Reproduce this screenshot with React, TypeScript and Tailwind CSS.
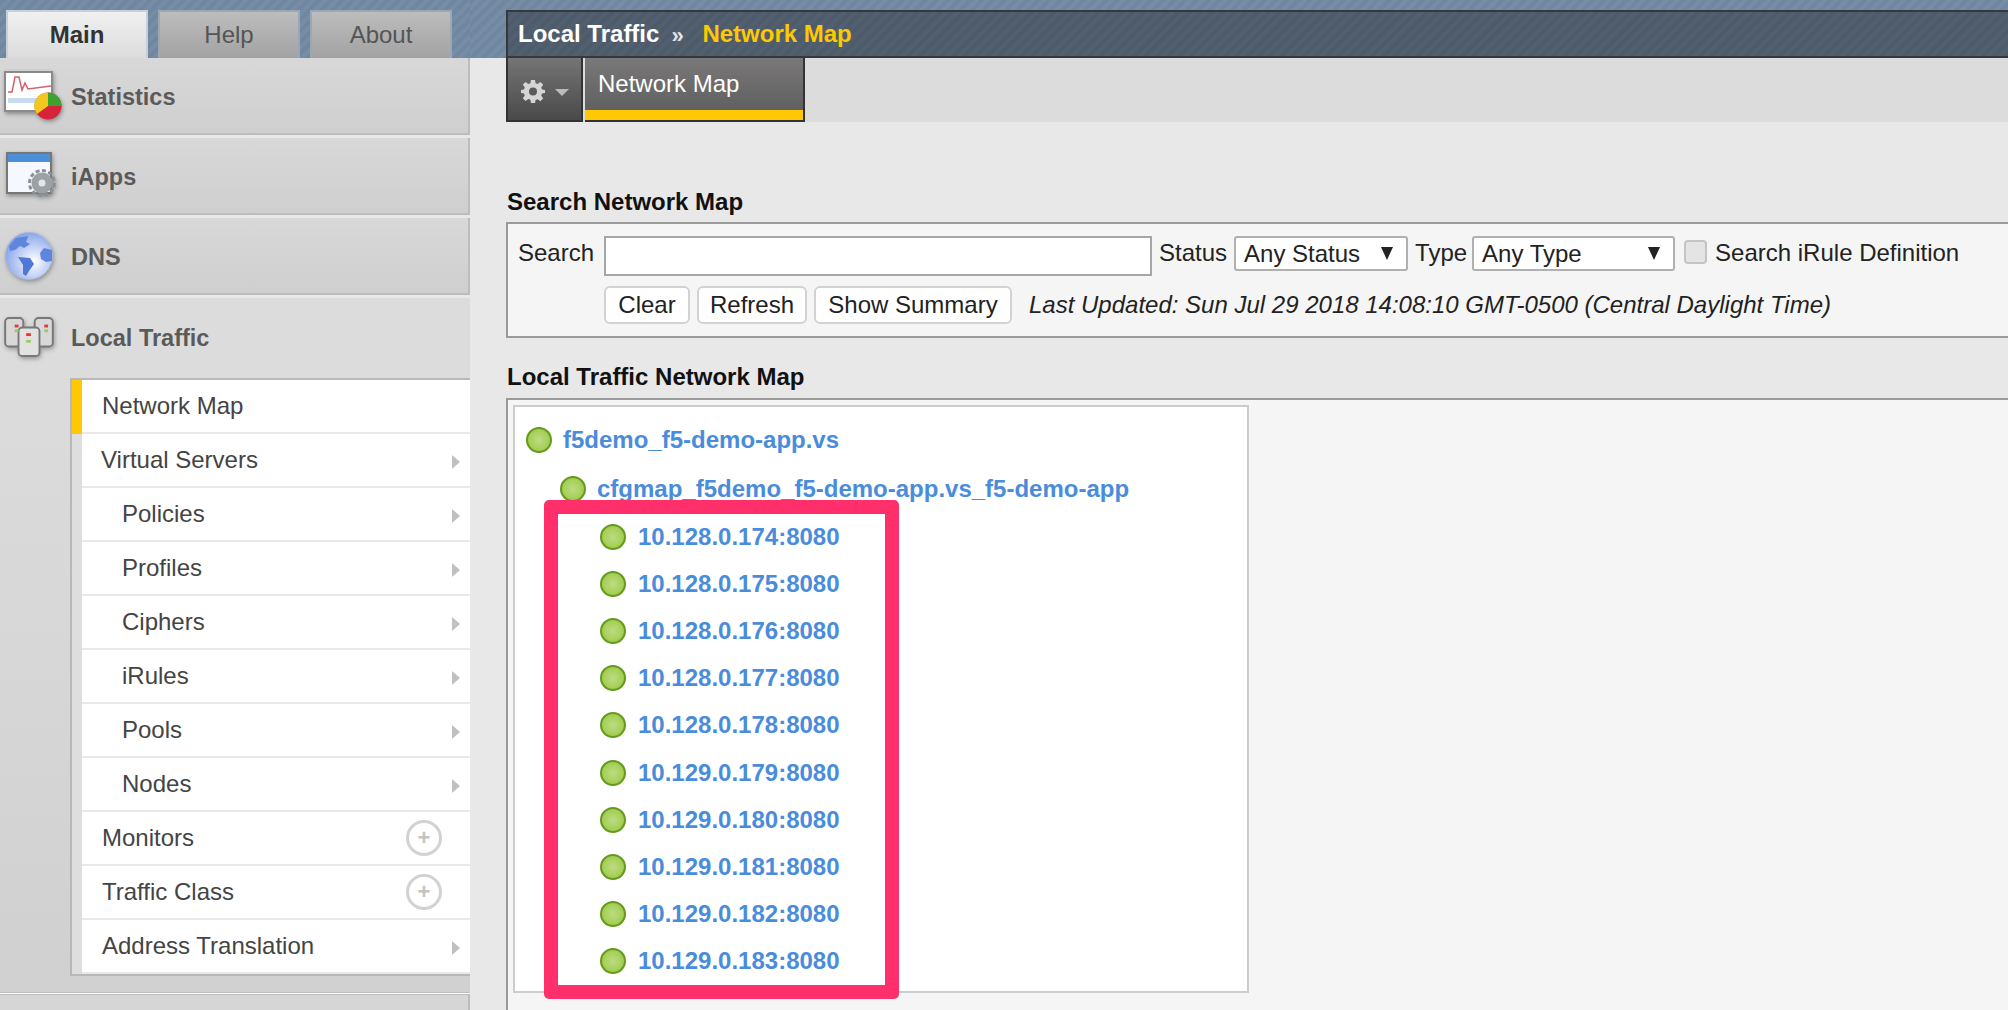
import React from 'react';

const menu = [
  { label: 'Network Map', pad: 'pl-[20px]', active: true },
  { label: 'Virtual Servers', pad: 'pl-[19px]', arrow: true },
  { label: 'Policies', pad: 'pl-[40px]', arrow: true },
  { label: 'Profiles', pad: 'pl-[40px]', arrow: true },
  { label: 'Ciphers', pad: 'pl-[40px]', arrow: true },
  { label: 'iRules', pad: 'pl-[40px]', arrow: true },
  { label: 'Pools', pad: 'pl-[40px]', arrow: true },
  { label: 'Nodes', pad: 'pl-[40px]', arrow: true },
  { label: 'Monitors', pad: 'pl-[20px]', plus: true },
  { label: 'Traffic Class', pad: 'pl-[20px]', plus: true },
  { label: 'Address Translation', pad: 'pl-[20px]', arrow: true },
];

const members = [
  '10.128.0.174:8080',
  '10.128.0.175:8080',
  '10.128.0.176:8080',
  '10.128.0.177:8080',
  '10.128.0.178:8080',
  '10.129.0.179:8080',
  '10.129.0.180:8080',
  '10.129.0.181:8080',
  '10.129.0.182:8080',
  '10.129.0.183:8080',
];

const StatsIcon = () => (
  <svg width="60" height="52" viewBox="0 0 60 52" className="drop-shadow-[1px_2px_2px_rgba(0,0,0,0.35)]">
    <rect x="1" y="2" width="47" height="39" fill="#fff" stroke="#8a8a8a" strokeWidth="2" />
    <rect x="4" y="28" width="43" height="5" fill="#c9dcef" />
    <path d="M4 22 L8 22 L11 7 L15 7 L18 20 L21 13 L24 19 L47 16" fill="none" stroke="#d4606a" strokeWidth="1.500" />
    <circle cx="44" cy="36" r="13.500" fill="#d9233a" />
    <path d="M44 36 L44 22.500 A13.500 13.500 0 0 1 57.500 36 Z" fill="#3ea32e" />
    <path d="M44 36 L44 22.500 A13.500 13.500 0 0 0 33 44 Z" fill="#f2c81e" />
  </svg>
);

const AppsIcon = () => (
  <svg width="56" height="50" viewBox="0 0 56 50" className="drop-shadow-[1px_2px_2px_rgba(0,0,0,0.35)]">
    <rect x="3" y="2" width="44" height="40" fill="#f6f8ff" stroke="#777" strokeWidth="2" />
    <rect x="4" y="3" width="42" height="8" fill="#4a8fd8" />
    <circle cx="38" cy="32" r="12.500" fill="none" stroke="#8b9096" strokeWidth="3" strokeDasharray="4 2.500" />
    <circle cx="38" cy="32" r="10.500" fill="#9ca1a6" />
    <circle cx="38" cy="32" r="3.500" fill="#e6e6e6" />
  </svg>
);

const GlobeIcon = () => (
  <svg width="50" height="50" viewBox="0 0 50 50" className="drop-shadow-[1px_2px_2px_rgba(0,0,0,0.3)]">
    <defs>
      <radialGradient id="globe" cx="60%" cy="62%" r="70%">
        <stop offset="0%" stopColor="#ffffff" />
        <stop offset="100%" stopColor="#7a9bea" />
      </radialGradient>
    </defs>
    <circle cx="25" cy="25" r="23.500" fill="url(#globe)" stroke="#a9b6d6" />
    <path d="M5 15 L12 7 L24 5 L22 11 L26 13 L20 17 L16 15 L11 19 L6 20 Z" fill="#5f86dd" />
    <path d="M14 26 L26 27 L30 33 L25 40 L22 45 L19 43 L19 34 Z" fill="#4f78d6" />
    <path d="M36 22 L40 17 L48 19 L48 30 L42 31 L37 28 Z" fill="#5f86dd" />
  </svg>
);

const ServersIcon = () => (
  <svg width="50" height="40" viewBox="0 0 52 42" className="drop-shadow-[1px_2px_2px_rgba(0,0,0,0.3)]">
    <rect x="1" y="1" width="19" height="30" rx="4" fill="#d8d8d8" stroke="#777" strokeWidth="2" />
    <rect x="32" y="1" width="19" height="30" rx="4" fill="#d8d8d8" stroke="#777" strokeWidth="2" />
    <rect x="15" y="11" width="22" height="30" rx="4" fill="#e2e2e2" stroke="#777" strokeWidth="2" />
    <rect x="11" y="8" width="4" height="3" fill="#e33" />
    <rect x="11" y="13" width="4" height="3" fill="#9c6" />
    <rect x="42" y="8" width="4" height="3" fill="#e33" />
    <rect x="42" y="13" width="4" height="3" fill="#9c6" />
    <rect x="23" y="17" width="5" height="3" fill="#e33" />
    <rect x="23" y="24" width="5" height="3" fill="#9c6" />
  </svg>
);

const Gear = () => (
  <svg width="24" height="26" viewBox="0 0 24 24" fill="#d4d4d4">
    <path d="M10 1h4l.6 3.200 2 .8L19.400 3l2.800 2.800-2 2.800.8 2L24 11v3l-3 .6-.8 2 2 2.800-2.800 2.800-2.800-2-2 .8L14 24h-4l-.6-3.200-2-.8L4.600 22l-2.800-2.800 2-2.800-.8-2L0 14v-3l3-.6.8-2-2-2.800L4.600 3l2.800 2 2-.8z" />
    <circle cx="12" cy="12.500" r="4" fill="#5a5a5a" />
  </svg>
);

const Dot = () => (
  <span className="block w-[26px] h-[26px] rounded-full border-2 border-[#659a1e] bg-[radial-gradient(circle_at_50%_50%,#bcdc84,#a6d058_60%,#8ab832)]" />
);

const Arrow = () => (
  <span className="w-0 h-0 mr-[10px] mt-[3px] border-y-[7px] border-y-transparent border-l-[8px] border-l-[#c0c0c0]" />
);

const Plus = () => (
  <span className="flex items-center justify-center w-[36px] h-[36px] mr-[28px] rounded-full border-[3px] border-[#d2d2d2] text-[#c4c4c4] font-bold text-[22px] leading-none">
    +
  </span>
);

const SideItem = ({ icon, label, light }: { icon: React.ReactNode; label: string; light?: boolean }) => (
  <div
    className={
      light
        ? 'flex items-center h-[77px] bg-[#dcdcdc]'
        : 'flex items-center h-[77px] mb-[3px] border-r-2 border-b-2 border-[#bdbdbd] bg-gradient-to-b from-[#d8d8d8] to-[#cfcfcf]'
    }
  >
    <div className="w-[71px] pl-[4px] flex items-center">{icon}</div>
    <span className="pt-[3px] font-bold text-[#5a5a5a] text-[23.500px]">{label}</span>
  </div>
);

const Tab = ({ label, active }: { label: string; active?: boolean }) => (
  <div
    className={
      active
        ? 'flex items-center justify-center w-[142px] h-[48px] border-x-2 border-t-2 border-[#c6d0da] bg-gradient-to-b from-[#f0f0f0] to-[#dcdcdc] font-bold text-[#333]'
        : 'flex items-center justify-center w-[142px] h-[48px] border-x-2 border-t-2 border-[#9aa8b6] bg-gradient-to-b from-[#bdbdbd] to-[#a2a2a2] text-[#555]'
    }
  >
    {label}
  </div>
);

const Dropdown = ({ label, width }: { label: string; width: string }) => (
  <div className={`flex items-center justify-between h-[35px] pl-[8px] pr-[13px] bg-white border-2 border-[#b0b0b0] rounded-[3px] ${width}`}>
    <span>{label}</span>
    <span className="w-0 h-0 border-x-[6px] border-x-transparent border-t-[13px] border-t-[#222]" />
  </div>
);

const Btn = ({ label, width }: { label: string; width: string }) => (
  <div className={`flex items-center justify-center h-[38px] bg-white border-2 border-[#d2d2d2] rounded-[6px] ${width}`}>{label}</div>
);

const Link = ({ text }: { text: string }) => <span className="font-bold text-[#4a8cdc]">{text}</span>;

export default function App() {
  return (
    <div className="flex w-[2008px] h-[1010px] overflow-hidden bg-[#e8e8e8] text-[24px] leading-[28px] text-[#333] font-['Liberation_Sans',Arial,sans-serif]">
      {/* left nav */}
      <div className="w-[470px] shrink-0 flex flex-col">
        <div className="flex gap-[10px] h-[58px] pt-[10px] pl-[6px] bg-[repeating-linear-gradient(135deg,#6f87a1_0,#6f87a1_4px,#768da5_4px,#768da5_8px)]">
          <Tab label="Main" active />
          <Tab label="Help" />
          <Tab label="About" />
        </div>
        <SideItem icon={<StatsIcon />} label="Statistics" />
        <SideItem icon={<AppsIcon />} label="iApps" />
        <SideItem icon={<GlobeIcon />} label="DNS" />
        <SideItem icon={<ServersIcon />} label="Local Traffic" light />
        <div className="flex-1 flex flex-col bg-gradient-to-b from-[#dcdcdc] to-[#d0d0d0]">
          <div className="ml-[70px] mt-[3px] border-l-2 border-y-2 border-[#b8b8b8]">
            {menu.map((item) => (
              <div key={item.label} className="flex h-[54px]">
                <div className={item.active ? 'w-[10px] bg-[#ffc800]' : 'w-[10px] bg-[#dedede]'} />
                <div className={`flex-1 flex items-center justify-between bg-white border-b-2 border-[#e8e8e8] text-[#444] ${item.pad}`}>
                  <span>{item.label}</span>
                  {item.arrow && <Arrow />}
                  {item.plus && <Plus />}
                </div>
              </div>
            ))}
          </div>
          <div className="mt-[16px] h-[3px] border-y border-[#bdbdbd] bg-white" />
          <div className="flex-1 border-r-2 border-[#bdbdbd] bg-[#d6d6d6]" />
        </div>
      </div>

      {/* main */}
      <div className="flex-1 flex flex-col min-w-0">
        <div className="pt-[10px] pl-[36px] bg-[repeating-linear-gradient(135deg,#6f87a1_0,#6f87a1_4px,#768da5_4px,#768da5_8px)]">
          <div className="flex items-center h-[48px] pl-[10px] border-2 border-r-0 border-[#33393f] bg-[repeating-linear-gradient(135deg,#4e5b6b_0,#4e5b6b_4px,#525f6f_4px,#525f6f_8px)] font-bold text-white">
            <span>Local Traffic</span>
            <span className="w-[43px] pl-[12px] pt-[4px] text-[22px] text-[#e6e6e6]">»</span>
            <span className="text-[#ffc800]">Network Map</span>
          </div>
        </div>
        <div className="flex h-[64px] ml-[36px] bg-[#dcdcdc]">
          <div className="flex items-center gap-[10px] w-[77px] pl-[13px] pt-[4px] border-2 border-t-0 border-[#333] bg-gradient-to-b from-[#757575] to-[#4a4a4a]">
            <Gear />
            <span className="w-0 h-0 mt-[2px] border-x-[7px] border-x-transparent border-t-[7px] border-t-[#bbb]" />
          </div>
          <div className="w-[220px] ml-[2px] flex flex-col border-2 border-t-0 border-l-0 border-[#333] bg-gradient-to-b from-[#7a7878] to-[#5c5c5c] text-white">
            <div className="flex-1 pl-[13px] pt-[12px]">Network Map</div>
            <div className="h-[10px] bg-[#ffc800]" />
          </div>
        </div>

        <div className="ml-[37px] mt-[66px] h-[26px] font-bold text-[#111]">Search Network Map</div>
        <div className="ml-[36px] mt-[8px] h-[116px] border-y-2 border-l-2 border-[#9a9a9a] bg-[#f5f5f5] text-[#222]">
          <div className="flex items-start gap-[7px] mt-[12px] pl-[10px] h-[40px] leading-[34px]">
            <span className="w-[79px]">Search</span>
            <div className="w-[548px] h-[40px] bg-white border-2 border-[#a6a6a6]" />
            <span>Status</span>
            <Dropdown label="Any Status" width="w-[174px]" />
            <span>Type</span>
            <Dropdown label="Any Type" width="w-[203px] -ml-[2px]" />
            <span className="ml-[2px] mt-[4px] w-[23px] h-[24px] rounded-[4px] border-2 border-[#c4c4c4] bg-[#e4e4e4]" />
            <span className="ml-[1px]">Search iRule Definition</span>
          </div>
          <div className="flex items-center gap-[7px] mt-[10px] pl-[96px]">
            <Btn label="Clear" width="w-[86px]" />
            <Btn label="Refresh" width="w-[110px]" />
            <Btn label="Show Summary" width="w-[198px]" />
            <span className="ml-[10px] italic">Last Updated: Sun Jul 29 2018 14:08:10 GMT-0500 (Central Daylight Time)</span>
          </div>
        </div>

        <div className="ml-[37px] mt-[25px] font-bold text-[#111]">Local Traffic Network Map</div>
        <div className="flex-1 ml-[36px] mt-[7px] pl-[5px] pt-[5px] border-t-2 border-l-2 border-[#9a9a9a] bg-[#f5f5f5]">
          <div className="relative w-[736px] h-[588px] pt-[8px] border-2 border-[#cccccc] bg-white">
            <div className="flex items-center gap-[11px] h-[50px] pl-[11px]">
              <Dot />
              <Link text="f5demo_f5-demo-app.vs" />
            </div>
            <div className="flex items-center gap-[11px] h-[48px] pl-[45px]">
              <Dot />
              <Link text="cfgmap_f5demo_f5-demo-app.vs_f5-demo-app" />
            </div>
            {members.map((m) => (
              <div key={m} className="flex items-center gap-[12px] h-[47.200px] pl-[85px]">
                <Dot />
                <Link text={m} />
              </div>
            ))}
            {/* highlight drawn over the screenshot */}
            <div className="absolute left-[29px] top-[93px] w-[355px] h-[499px] border-[14px] border-[#ff2f6c] rounded-[5px]" />
          </div>
        </div>
      </div>
    </div>
  );
}
